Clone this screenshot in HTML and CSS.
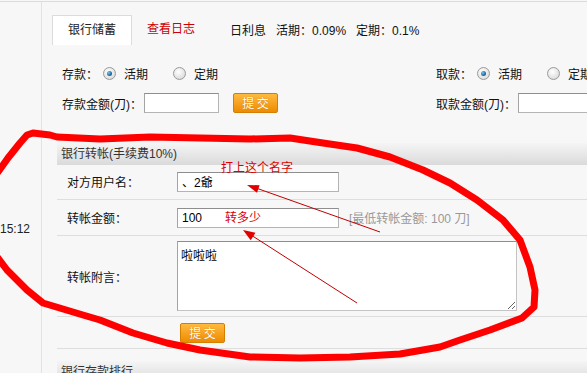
FILE: index.html
```html
<!DOCTYPE html>
<html>
<head>
<meta charset="utf-8">
<link rel="stylesheet" href="styles.css">
</head>
<body>
<div class="topline"></div>
<div class="page">
  <aside class="side"><div class="time">15:12</div></aside>
  <main class="main">
    <div class="tabs">
      <div class="tab">银行储蓄</div>
      <a class="tab-link">查看日志</a>
      <div class="rate"><span>日利息</span><span>活期：0.09%</span><span>定期：0.1%</span></div>
    </div>
    <div class="bank">
      <div class="col">
        <div class="frow"><span class="lbl">存款：</span><span class="radio on"></span><span class="opt">活期</span><span class="radio"></span><span class="opt">定期</span></div>
        <div class="frow"><span class="lbl">存款金额(刀)：</span><input class="inp short" type="text"><button class="btn">提 交</button></div>
      </div>
      <div class="col">
        <div class="frow"><span class="lbl">取款：</span><span class="radio on"></span><span class="opt">活期</span><span class="radio"></span><span class="opt">定期</span></div>
        <div class="frow"><span class="lbl">取款金额(刀)：</span><input class="inp short" type="text"><button class="btn">提 交</button></div>
      </div>
    </div>
    <section class="panel">
      <div class="phead">银行转帐(手续费10%)</div>
      <div class="prow r1"><label class="plbl">对方用户名：</label><input class="inp long" type="text" value="、2爺"></div>
      <div class="prow r2"><label class="plbl">转帐金额：</label><input class="inp long" type="text" value="100"><span class="hint">[最低转帐金额: 100 刀]</span></div>
      <div class="prow r3"><label class="plbl">转帐附言：</label><textarea class="area">啦啦啦</textarea></div>
      <div class="prow r4"><span class="plbl"></span><button class="btn sub">提 交</button></div>
    </section>
    <section class="panel second">
      <div class="phead">银行存款排行</div>
    </section>
  </main>
</div>
<svg class="overlay" width="587" height="373" viewBox="0 0 587 373">
  <polyline class="circle" points="-2,172 8,158 20,143 27,135 33,133 50,135 57,137 100,139 150,137 200,138 250,139 290,138 323,143 357,148 390,157 423,170 450,183 477,200 503,220 520,240 530,267 535,290 534,307 522,318 490,330 460,340 440,347 400,354 350,357 300,358 250,357 200,350 167,343 133,333 100,320 83,315 43,303 27,290 7,270 -2,258"/>
  <line class="arr" x1="380" y1="232" x2="256" y2="188"/>
  <polygon class="head" points="247,185 259.6,185.2 257,192.8"/>
  <line class="arr" x1="357" y1="303" x2="251" y2="235"/>
  <polygon class="head" points="243,230 255.5,232.7 250.7,240.3"/>
  <text class="note" x="221" y="172">打上这个名字</text>
  <text class="note" x="225" y="222">转多少</text>
</svg>
</body>
</html>
```

FILE: styles.css
```css
html, body {
  margin: 0;
  padding: 0;
  overflow: hidden;
  background: #f7f7f7;
  height: 373px;
}
body {
  font-family: "Liberation Sans", "Noto Sans CJK SC", sans-serif;
  font-size: 12px;
  color: #111;
  position: relative;
}
.topline {
  height: 1px;
  border-bottom: 1px solid #dcdcdc;
}
.page {
  display: flex;
  height: 371px;
}
.side {
  width: 41px;
  flex: none;
  border-right: 1px solid #e2e2e2;
  overflow: hidden;
}
.time {
  margin-top: 219px;
  line-height: 16px;
  font-size: 12px;
  color: #222;
}
.main {
  flex: 1;
  min-width: 0;
  overflow: hidden;
}
.tabs {
  display: flex;
  align-items: center;
  padding-left: 10px;
  margin-top: 13px;
  height: 29px;
}
.tab {
  width: 78px;
  height: 29px;
  line-height: 29px;
  text-align: center;
  background: #fff;
  border: 1px solid #dcdcdc;
  border-bottom: none;
  box-sizing: content-box;
  color: #222;
}
.tab-link {
  margin-left: 15px;
  color: #c00;
  line-height: 29px;
}
.rate {
  margin-left: 35px;
  display: flex;
  gap: 10px;
  white-space: nowrap;
  color: #111;
}
.bank {
  display: flex;
  margin-top: 19px;
  padding-left: 20px;
  width: 800px;
}
.col {
  width: 374px;
  flex: none;
  display: flex;
  flex-direction: column;
  gap: 10px;
}
.frow {
  display: flex;
  align-items: center;
  height: 20px;
  white-space: nowrap;
}
.lbl {
  color: #111;
}
.radio {
  width: 11px;
  height: 11px;
  border-radius: 50%;
  border: 1px solid #9a9a9a;
  background: radial-gradient(circle at 40% 35%, #ffffff 0%, #e4e4e4 60%, #cfcfcf 100%);
  box-sizing: content-box;
  position: relative;
  margin-left: 5px;
}
.frow .radio + .opt + .radio {
  margin-left: 25px;
}
.radio.on::after {
  content: "";
  position: absolute;
  left: 3px;
  top: 3px;
  width: 5px;
  height: 5px;
  border-radius: 50%;
  background: radial-gradient(circle at 35% 35%, #7fc0ec 0%, #1f6aa3 60%, #123e66 100%);
}
.opt {
  margin-left: 8px;
}
.inp {
  height: 20px;
  box-sizing: border-box;
  border: 1px solid #b4b4b4;
  border-top-color: #8e8e8e;
  border-left-color: #a4a4a4;
  background: #fff;
  font-family: "Liberation Sans", "Noto Sans CJK SC", sans-serif;
  font-size: 12px;
  padding: 0 5px;
  margin: 0;
  color: #000;
  outline: none;
}
.short {
  width: 75px;
  margin-left: 2px;
}
.btn {
  width: 45px;
  height: 20px;
  box-sizing: border-box;
  border: 1px solid #d47f00;
  border-radius: 2px;
  background: linear-gradient(#fdbb40, #f6a01d 55%, #ec8c00);
  color: #fff;
  font-family: "Noto Sans CJK SC", sans-serif;
  font-size: 12px;
  line-height: 16px;
  padding: 0;
  margin: 0 0 0 14px;
  text-shadow: 0 0 1px #c66c00;
}
.panel {
  margin-left: 15px;
  margin-top: 30px;
  width: 700px;
}
.panel.second {
  margin-top: 12px;
}
.phead {
  height: 22px;
  line-height: 22px;
  padding-left: 4px;
  background: linear-gradient(#f5f5f5, #dadada);
  color: #333;
  font-size: 12px;
}
.prow {
  display: flex;
  align-items: center;
  border-bottom: 1px solid #dedede;
  box-sizing: border-box;
}
.r1 { height: 35px; padding-bottom: 1px; }
.r2 { height: 36px; }
.r3 { height: 81px; }
.r4 { height: 32px; }
.plbl {
  width: 110px;
  padding-left: 10px;
  flex: none;
  color: #111;
}
.long {
  width: 162px;
  padding-left: 4px;
}
.hint {
  margin-left: 10px;
  color: #999;
  white-space: nowrap;
}
.area {
  width: 340px;
  height: 70px;
  box-sizing: border-box;
  border: 1px solid #c4c4c4;
  border-top-color: #8e8e8e;
  border-left-color: #a4a4a4;
  background: #fff;
  font-family: "Noto Sans CJK SC", sans-serif;
  font-size: 12px;
  padding: 4px 3px;
  margin: 0;
  color: #000;
  outline: none;
}
.btn.sub {
  margin-left: 3px;
}
.overlay {
  position: absolute;
  left: 0;
  top: 0;
  pointer-events: none;
}
.circle {
  fill: none;
  stroke: #ff0000;
  stroke-width: 7;
  stroke-linejoin: round;
  stroke-linecap: round;
}
.arr {
  stroke: #c00000;
  stroke-width: 1;
}
.head {
  fill: #e00000;
}
.note {
  fill: #dd0000;
  font-family: "Noto Sans CJK SC", sans-serif;
  font-size: 12px;
}
```
